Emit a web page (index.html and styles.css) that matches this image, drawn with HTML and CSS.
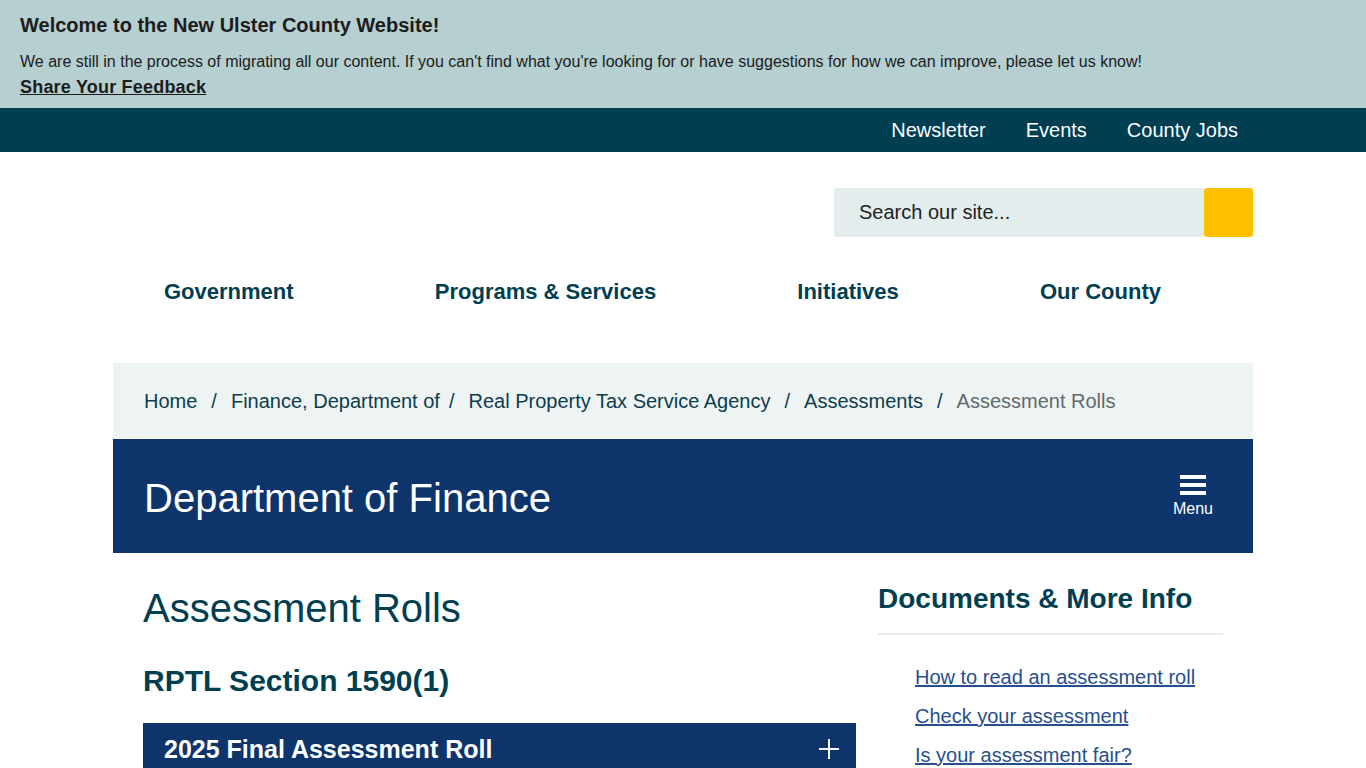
FILE: index.html
```html
<!DOCTYPE html>
<html lang="en">
<head>
  <meta charset="UTF-8" />
  <meta name="viewport" content="width=device-width, initial-scale=1.0" />
  <title>Assessment Rolls | Ulster County</title>
  <link rel="stylesheet" href="styles.css">
</head>
<body>
  <div class="alert-banner">
    <h2>Welcome to the New Ulster County Website!</h2>
    <p>We are still in the process of migrating all our content. If you can't find what you're looking for or have suggestions for how we can improve, please let us know!</p>
    <a href="#" class="feedback-link">Share Your Feedback</a>
  </div>

  <div class="top-bar">
    <div class="container top-links">
      <a href="#">Newsletter</a>
      <a href="#">Events</a>
      <a href="#">County Jobs</a>
    </div>
  </div>

  <header class="container site-header">
    <form class="search-form">
      <input type="text" placeholder="Search our site...">
      <button type="submit" aria-label="Search"></button>
    </form>
    <nav class="main-nav">
      <a href="#">Government</a>
      <a href="#">Programs &amp; Services</a>
      <a href="#">Initiatives</a>
      <a href="#">Our County</a>
    </nav>
  </header>

  <div class="container">
    <div class="breadcrumb">
      <a href="#">Home</a><span class="sep">/</span>
      <a href="#">Finance, Department of</a><span class="sep tight">/</span>
      <a href="#">Real Property Tax Service Agency</a><span class="sep">/</span>
      <a href="#">Assessments</a><span class="sep">/</span>
      <span class="current">Assessment Rolls</span>
    </div>

    <div class="dept-banner">
      <h1>Department of Finance</h1>
      <button class="menu-btn">
        <span class="bars"><i></i><i></i><i></i></span>
        Menu
      </button>
    </div>

    <div class="page-body">
      <main class="content">
        <h2 class="page-title">Assessment Rolls</h2>
        <h3 class="section-title">RPTL Section 1590(1)</h3>
        <div class="accordion">
          <span>2025 Final Assessment Roll</span>
          <svg class="plus" width="20" height="20" viewBox="0 0 20 20">
            <path d="M10 0v20M0 10h20" stroke="#fff" stroke-width="2"/>
          </svg>
        </div>
      </main>

      <aside class="sidebar">
        <h2>Documents &amp; More Info</h2>
        <ul>
          <li><a href="#">How to read an assessment roll</a></li>
          <li><a href="#">Check your assessment</a></li>
          <li><a href="#">Is your assessment fair?</a></li>
        </ul>
      </aside>
    </div>
  </div>
</body>
</html>
```

FILE: styles.css
```css
* {
  box-sizing: border-box;
  margin: 0;
  padding: 0;
}

body {
  font-family: "Liberation Sans", Arial, sans-serif;
  background-color: #fff;
  color: #1f1f1f;
}

.container {
  width: 1140px;
  margin: 0 auto;
}

/* alert banner */
.alert-banner {
  background-color: #b6cfd1;
  padding: 12px 20px 9px;
  color: #1c1c1c;
}

.alert-banner h2 {
  font-size: 20px;
  line-height: 26px;
  font-weight: bold;
  margin-bottom: 12px;
}

.alert-banner p {
  font-size: 16px;
  line-height: 24px;
}

.feedback-link {
  display: block;
  margin-top: 1px;
  font-size: 18px;
  line-height: 24px;
  letter-spacing: 0.2px;
  font-weight: bold;
  color: #1c1c1c;
}

/* top bar */
.top-bar {
  background-color: #003e52;
}

.top-links {
  display: flex;
  justify-content: flex-end;
  gap: 40px;
  padding-right: 15px;
  height: 44px;
  align-items: center;
}

.top-links a {
  color: #fff;
  text-decoration: none;
  font-size: 20px;
}

/* header */
.site-header {
  padding-top: 36px;
}

.search-form {
  display: flex;
  justify-content: flex-end;
}

.search-form input {
  width: 370px;
  height: 49px;
  border: none;
  background-color: #e4eded;
  border-radius: 3px 0 0 3px;
  padding: 0 25px;
  font-family: inherit;
  font-size: 20px;
  color: #222;
}

.search-form input::placeholder {
  color: #222;
}

.search-form button {
  width: 49px;
  height: 49px;
  border: none;
  background-color: #ffc000;
  border-radius: 3px;
}

.main-nav {
  display: flex;
  justify-content: space-between;
  padding: 0 92px 0 51px;
  margin: 44px 0 60px;
}

.main-nav a {
  font-size: 22px;
  line-height: 22px;
  font-weight: bold;
  color: #003e52;
  text-decoration: none;
}

/* breadcrumb */
.breadcrumb {
  background-color: #eef4f4;
  height: 76px;
  display: flex;
  align-items: center;
  padding: 0 31px;
  font-size: 20px;
}

.breadcrumb a {
  color: #0d3c4d;
  text-decoration: none;
}

.breadcrumb .sep {
  color: #0d3c4d;
  margin: 0 14px;
}

.breadcrumb .sep.tight {
  margin-left: 9px;
}

.breadcrumb .current {
  color: #5f6a6c;
}

/* department banner */
.dept-banner {
  background-color: #0d346b;
  height: 114px;
  display: flex;
  align-items: center;
  justify-content: space-between;
  padding: 0 40px 0 31px;
  color: #fff;
}

.dept-banner h1 {
  font-size: 40px;
  font-weight: normal;
  margin-top: 4px;
}

.menu-btn {
  background: none;
  border: none;
  color: #fff;
  font-family: inherit;
  font-size: 16px;
  display: flex;
  flex-direction: column;
  align-items: center;
  gap: 5px;
}

.bars {
  display: flex;
  flex-direction: column;
  gap: 4px;
}

.bars i {
  display: block;
  width: 26px;
  height: 4px;
  background-color: #fff;
}

/* body */
.page-body {
  display: flex;
  gap: 22px;
  padding: 0 30px;
}

.content {
  width: 713px;
}

.page-title {
  font-size: 40px;
  line-height: 48px;
  font-weight: normal;
  color: #003e52;
  margin-top: 31px;
}

.section-title {
  font-size: 30px;
  line-height: 36px;
  font-weight: bold;
  color: #003e52;
  margin-top: 31px;
}

.accordion {
  margin-top: 24px;
  background-color: #0d346b;
  color: #fff;
  height: 52px;
  padding: 0 17px 0 21px;
  display: flex;
  align-items: center;
  justify-content: space-between;
  font-size: 25px;
  font-weight: bold;
}

.sidebar {
  flex: 1;
}

.sidebar h2 {
  font-size: 28px;
  line-height: 34px;
  font-weight: bold;
  color: #003e52;
  margin-top: 29px;
  padding-bottom: 17px;
  border-bottom: 2px solid #e8ecec;
}

.sidebar ul {
  list-style: none;
  padding: 23px 0 0 37px;
}

.sidebar li {
  font-size: 20px;
  line-height: 39px;
}

.sidebar a {
  color: #264f8e;
}
```
